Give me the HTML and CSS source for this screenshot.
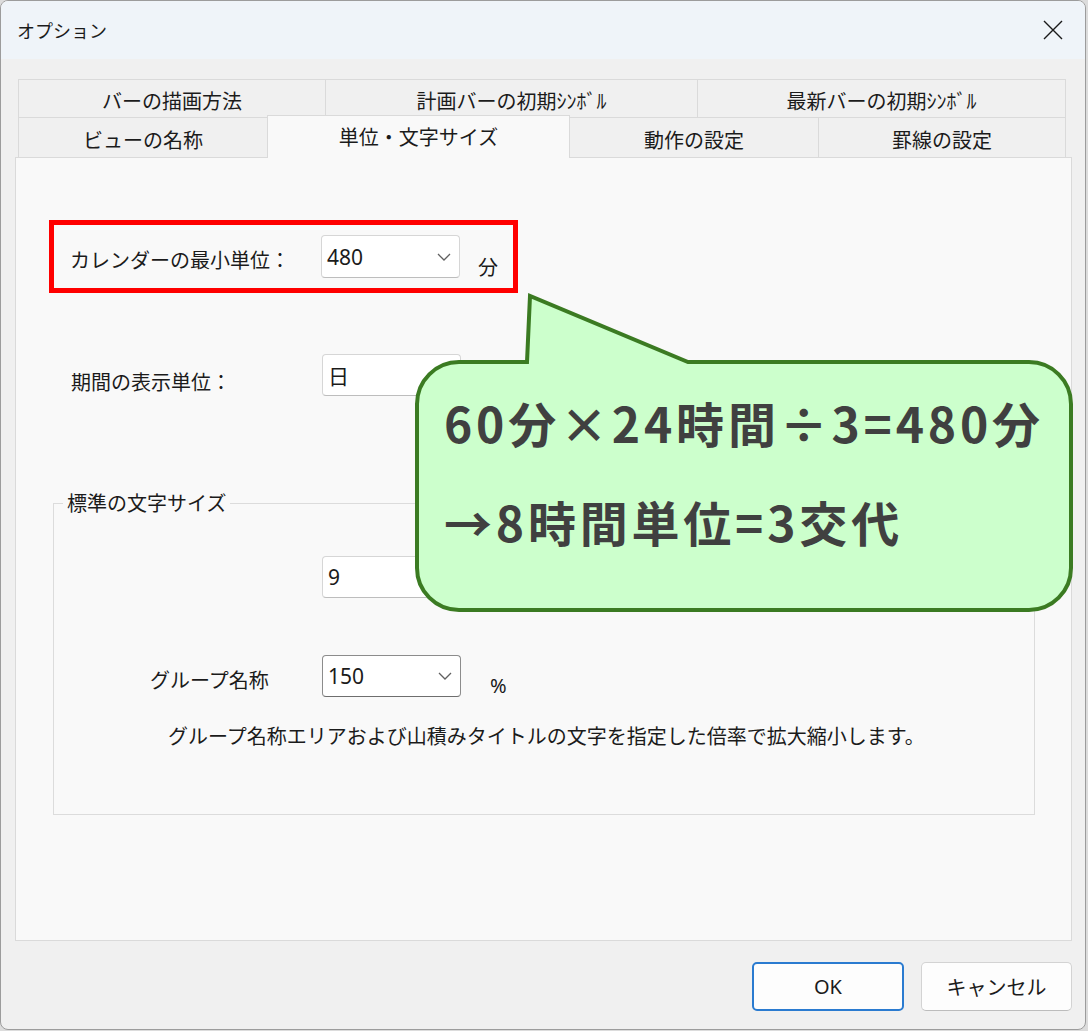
FILE: index.html
```html
<!DOCTYPE html>
<html lang="ja">
<head>
<meta charset="utf-8">
<title>オプション</title>
<link rel="stylesheet" href="styles.css">
</head>
<body>
<div class="window">
  <div class="titlebar">
    <span class="title">オプション</span>
    <span class="close" aria-label="閉じる">
      <svg width="22" height="22" viewBox="0 0 22 22"><path d="M2 2 L20 20 M20 2 L2 20" stroke="#1a1a1a" stroke-width="1.4" fill="none"/></svg>
    </span>
  </div>
  <div class="dlg">
    <div class="tabs">
      <div class="tabrow tabrow-top">
        <div class="tab t-draw">バーの描画方法</div>
        <div class="tab t-plan">計画バーの初期ｼﾝﾎﾞﾙ</div>
        <div class="tab t-new">最新バーの初期ｼﾝﾎﾞﾙ</div>
      </div>
      <div class="tabrow tabrow-bottom">
        <div class="tab t-view">ビューの名称</div>
        <div class="tab t-unit selected">単位・文字サイズ</div>
        <div class="tab t-action">動作の設定</div>
        <div class="tab t-rule">罫線の設定</div>
      </div>
    </div>
    <div class="panel">
      <div class="highlight">
        <span class="label label-cal">カレンダーの最小単位：</span>
        <div class="combo"><span class="combo-value">480</span><svg class="chev" width="14" height="8" viewBox="0 0 14 8"><path d="M1 1 L7 7 L13 1" stroke="#606060" stroke-width="1.3" fill="none"/></svg></div>
        <span class="unit unit-min">分</span>
      </div>
      <div class="field field-period">
        <span class="label label-period">期間の表示単位：</span>
        <div class="combo combo-plain"><span class="combo-value">日</span></div>
      </div>
      <fieldset class="group">
        <legend>標準の文字サイズ</legend>
        <div class="combo combo-plain combo-size"><span class="combo-value">9</span></div>
        <div class="field field-group">
          <span class="label label-group">グループ名称</span>
          <div class="combo combo-focus"><span class="combo-value">150</span><svg class="chev" width="14" height="8" viewBox="0 0 14 8"><path d="M1 1 L7 7 L13 1" stroke="#606060" stroke-width="1.3" fill="none"/></svg></div>
          <span class="unit unit-pct">%</span>
        </div>
        <p class="desc">グループ名称エリアおよび山積みタイトルの文字を指定した倍率で拡大縮小します。</p>
      </fieldset>
    </div>
    <div class="buttons">
      <button class="btn btn-ok">OK</button>
      <button class="btn">キャンセル</button>
    </div>
  </div>
  <div class="callout">
    <svg class="callout-shape" width="668" height="330" viewBox="0 0 668 330">
      <path d="M117 74 L120 8 L278 74 L619 74 A42 42 0 0 1 661 116 L661 280 A42 42 0 0 1 619 322 L49 322 A42 42 0 0 1 7 280 L7 116 A42 42 0 0 1 49 74 Z" fill="#ccffcc" stroke="#3b7b22" stroke-width="4" stroke-linejoin="miter"/>
    </svg>
    <div class="callout-text">
      <div>60分×24時間÷3=480分</div>
      <div>→8時間単位=3交代</div>
    </div>
  </div>
</div>
</body>
</html>
```

FILE: styles.css
```css
html, body {
  margin: 0;
  padding: 0;
  background: #dcdcdc;
}

.window {
  position: relative;
  box-sizing: border-box;
  width: 1086px;
  height: 1030px;
  border: 1px solid #9c9c9c;
  border-radius: 8px;
  overflow: hidden;
  background: #f0f0f0;
  font-family: "Noto Sans", "Noto Sans CJK JP", sans-serif;
  color: #1b1b1b;
  font-size: 20px;
}

.titlebar {
  height: 58px;
  background: #eff4f9;
  display: flex;
  align-items: center;
  justify-content: space-between;
  padding: 0 21px 0 16px;
}

.title {
  font-size: 18px;
  font-family: "Noto Sans CJK JP", sans-serif;
  padding-top: 0;
}

.close {
  display: flex;
  width: 22px;
  height: 22px;
}

.dlg {
  padding: 20px 13px 0 14px;
}

.tabs {
  margin: 0 3px;
  position: relative;
  z-index: 2;
}

.tabrow {
  display: flex;
}

.tabrow-top {
  height: 38px;
}

.tabrow-bottom {
  height: 40px;
  align-items: flex-end;
}

.tab {
  box-sizing: border-box;
  height: 100%;
  border-top: 1px solid #dadada;
  border-left: 1px solid #dadada;
  background: #f0f0f0;
  display: flex;
  align-items: center;
  justify-content: center;
  padding-top: 3px;
  font-family: "Noto Sans CJK JP", sans-serif;
  white-space: nowrap;
}

.tab:last-child {
  border-right: 1px solid #dadada;
}

.t-draw { width: 307px; }
.t-plan { width: 372px; }
.t-new { width: 369px; }
.t-view { width: 249px; }
.t-unit { width: 303px; }
.t-action { width: 248px; border-left: none; }
.t-rule { width: 248px; }

.tab.selected {
  height: 43px;
  margin-bottom: -1px;
  background: #f9f9f9;
  border-right: 1px solid #dadada;
  padding-top: 0;
  padding-bottom: 2px;
}

.panel {
  position: relative;
  z-index: 1;
  box-sizing: border-box;
  height: 784px;
  border: 1px solid #dadada;
  background: #f9f9f9;
  padding: 62px 0 0 33px;
}

.highlight {
  box-sizing: border-box;
  width: 469px;
  height: 73px;
  border: 5px solid #ff0000;
  display: flex;
  align-items: center;
  padding-left: 16px;
}

.label {
  font-family: "Noto Sans CJK JP", sans-serif;
  white-space: nowrap;
}

.label-cal {
  width: 251px;
  margin-top: 5px;
}

.combo {
  box-sizing: border-box;
  width: 139px;
  height: 43px;
  background: #ffffff;
  border: 1px solid #d6d6d6;
  border-bottom-color: #bdbdbd;
  border-radius: 4px;
  display: flex;
  align-items: center;
  justify-content: space-between;
  padding: 0 8px 0 5px;
  flex-shrink: 0;
}

.combo-value {
  font-size: 21px;
  font-family: "Noto Sans", "Noto Sans CJK JP", sans-serif;
}

.chev {
  display: block;
}

.combo-focus {
  border: 1px solid #8c8c8c;
  border-bottom-color: #6e6e6e;
}

.unit {
  margin-left: 18px;
}

.unit-min {
  margin-top: 20px;
  font-family: "Noto Sans CJK JP", sans-serif;
}

.field {
  display: flex;
  align-items: center;
}

.field-period {
  margin: 60px 0 0 22px;
}

.label-period {
  width: 251px;
  margin-top: 14px;
}

.field-period .combo {
  height: 42px;
}

.group {
  box-sizing: border-box;
  width: 982px;
  height: 324px;
  margin: 95px 0 0 4px;
  padding: 0;
  border: 1px solid #dcdcdc;
  min-inline-size: 0;
}

.group legend {
  margin-left: 9px;
  padding: 0 4px;
  line-height: 24px;
  font-family: "Noto Sans CJK JP", sans-serif;
}

.combo-size {
  height: 42px;
  margin: 41px 0 0 268px;
}

.field-group {
  margin: 55px 0 0 96px;
}

.label-group {
  width: 172px;
  margin-top: 6px;
}

.field-group .combo {
  height: 42px;
}

.unit-pct {
  margin-left: 29px;
  margin-top: 19px;
}

.desc {
  margin: 25px 0 0 114px;
  line-height: 24px;
  font-family: "Noto Sans CJK JP", sans-serif;
}

.buttons {
  display: flex;
  justify-content: flex-end;
  gap: 17px;
  margin-top: 21px;
}

.btn {
  box-sizing: border-box;
  width: 151px;
  height: 49px;
  background: #fdfdfd;
  border: 1px solid #d3d3d3;
  border-bottom-color: #bcbcbc;
  border-radius: 5px;
  font-family: "Noto Sans", "Noto Sans CJK JP", sans-serif;
  font-size: 20px;
  color: #1b1b1b;
  padding: 0;
}

.btn-ok {
  width: 152px;
  border: 2px solid #2a7bd0;
}

.callout {
  position: absolute;
  left: 409px;
  top: 287px;
  width: 668px;
  height: 330px;
  z-index: 5;
}

.callout-shape {
  position: absolute;
  left: 0;
  top: 0;
}

.callout-text {
  position: relative;
  padding: 85px 0 0 34px;
  font-family: "Noto Sans CJK JP", sans-serif;
  font-weight: 700;
  font-size: 48px;
  letter-spacing: 3.8px;
  line-height: 99px;
  color: #404040;
  white-space: nowrap;
}
```
